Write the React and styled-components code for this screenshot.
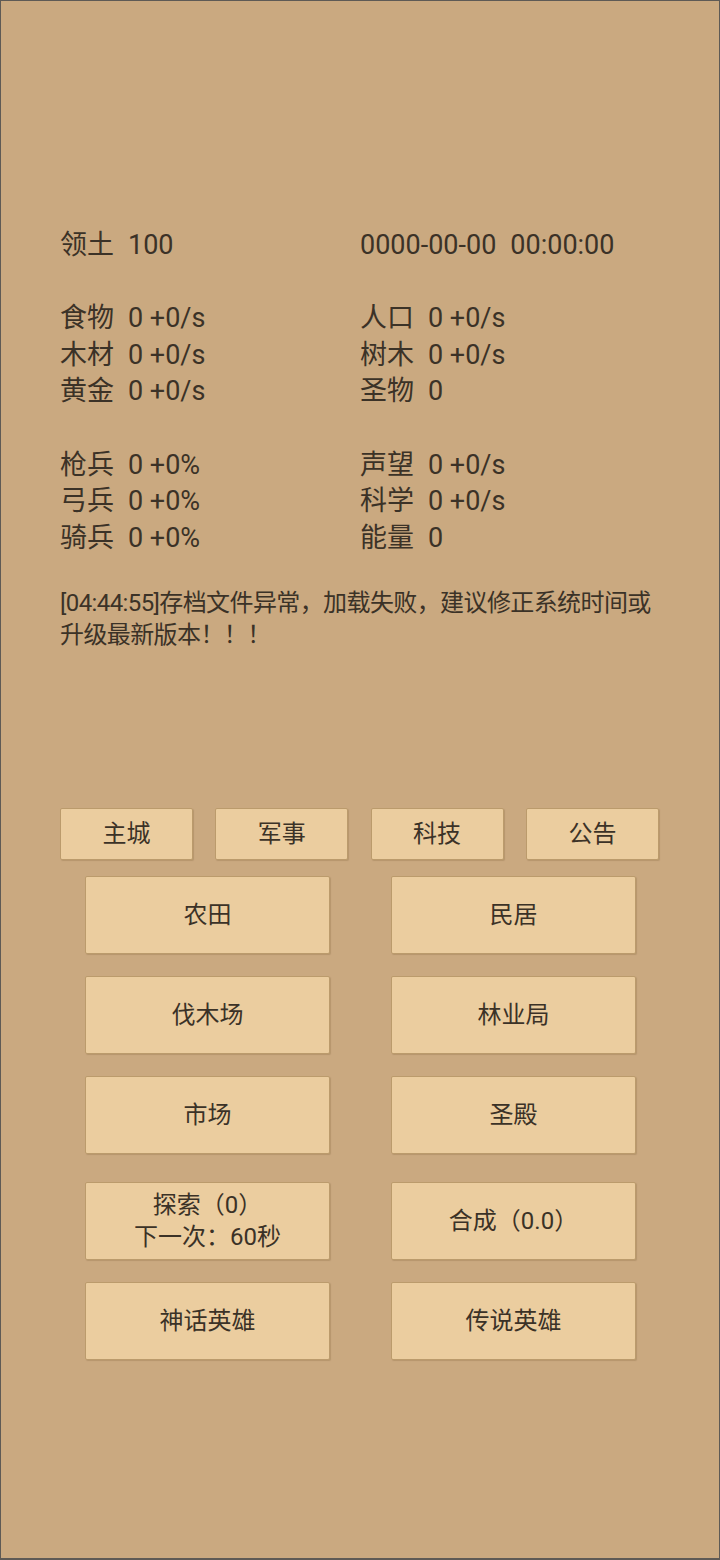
import React from 'react'
import styled, { createGlobalStyle } from 'styled-components'

const Global = createGlobalStyle`
  html, body {
    margin: 0;
    padding: 0;
    background: #caa980;
  }
  * { box-sizing: border-box; }
`

const Screen = styled.div`
  width: 720px;
  height: 1560px;
  border: 1px solid #5e5a55;
  border-bottom-width: 2px;
  background: #caa980;
  color: #3b3227;
  font-family: Roboto, "Noto Sans CJK SC", sans-serif;
  padding: 226px 59px 0;
`

const Stats = styled.div`
  display: grid;
  grid-template-columns: 300px 300px;
  grid-auto-rows: 36.6px;
  font-size: 27px;
  line-height: 36.6px;
`

const Cell = styled.div`
  display: flex;
  gap: 14px;
  white-space: nowrap;
`

const Spacer = styled.div`
  grid-column: 1 / span 2;
`

const Message = styled.p`
  margin: 31px 0 0;
  width: 602px;
  font-size: 24px;
  line-height: 32px;
  letter-spacing: -0.6px;
`

const Tabs = styled.div`
  display: grid;
  grid-template-columns: repeat(4, 133px);
  column-gap: 22.3px;
  margin-top: 157px;
`

const Button = styled.button`
  font-family: Roboto, "Noto Sans CJK SC", sans-serif;
  font-size: 24px;
  line-height: 32px;
  color: #3b3227;
  background: #ebcd9f;
  border: 1px solid #bb9b6c;
  border-radius: 2px;
  box-shadow: 1px 1px 1px rgba(120, 90, 50, 0.25);
  padding: 0;
  height: ${p => p.$h}px;
  cursor: pointer;
`

const Grid = styled.div`
  display: grid;
  grid-template-columns: 245px 245px;
  column-gap: 61px;
  justify-content: center;
  margin: 16px 0 0 1px;
`

const Row = styled.div`
  display: contents;
`

const BigButton = styled(Button)`
  margin-top: ${p => p.$top}px;
`

const stats = [
  [['领土', '100'], ['0000-00-00', '00:00:00']],
  null,
  [['食物', '0 +0/s'], ['人口', '0 +0/s']],
  [['木材', '0 +0/s'], ['树木', '0 +0/s']],
  [['黄金', '0 +0/s'], ['圣物', '0']],
  null,
  [['枪兵', '0 +0%'], ['声望', '0 +0/s']],
  [['弓兵', '0 +0%'], ['科学', '0 +0/s']],
  [['骑兵', '0 +0%'], ['能量', '0']],
]

const tabs = ['主城', '军事', '科技', '公告']

const buildings = [
  [['农田'], ['民居']],
  [['伐木场'], ['林业局']],
  [['市场'], ['圣殿']],
  [['探索（0）', '下一次：60秒'], ['合成（0.0）']],
  [['神话英雄'], ['传说英雄']],
]

const tops = [0, 22, 22, 28, 22]

export default function App() {
  return (
    <Screen>
      <Global />
      <Stats>
        {stats.map((row, i) =>
          row === null ? (
            <Spacer key={`s-${i}`} />
          ) : (
            row.map(([label, value], j) => (
              <Cell key={`c-${i}-${j}`}>
                <span>{label}</span>
                <span>{value}</span>
              </Cell>
            ))
          )
        )}
      </Stats>
      <Message>
        [04:44:55]存档文件异常，加载失败，建议修正系统时间或升级最新版本！！！
      </Message>
      <Tabs>
        {tabs.map(t => (
          <Button key={t} $h={52}>{t}</Button>
        ))}
      </Tabs>
      <Grid>
        {buildings.map((row, i) => (
          <Row key={`r-${i}`}>
            {row.map((lines, j) => (
              <BigButton key={`b-${i}-${j}`} $h={78} $top={tops[i]}>
                {lines.map(l => (
                  <div key={l}>{l}</div>
                ))}
              </BigButton>
            ))}
          </Row>
        ))}
      </Grid>
    </Screen>
  )
}
